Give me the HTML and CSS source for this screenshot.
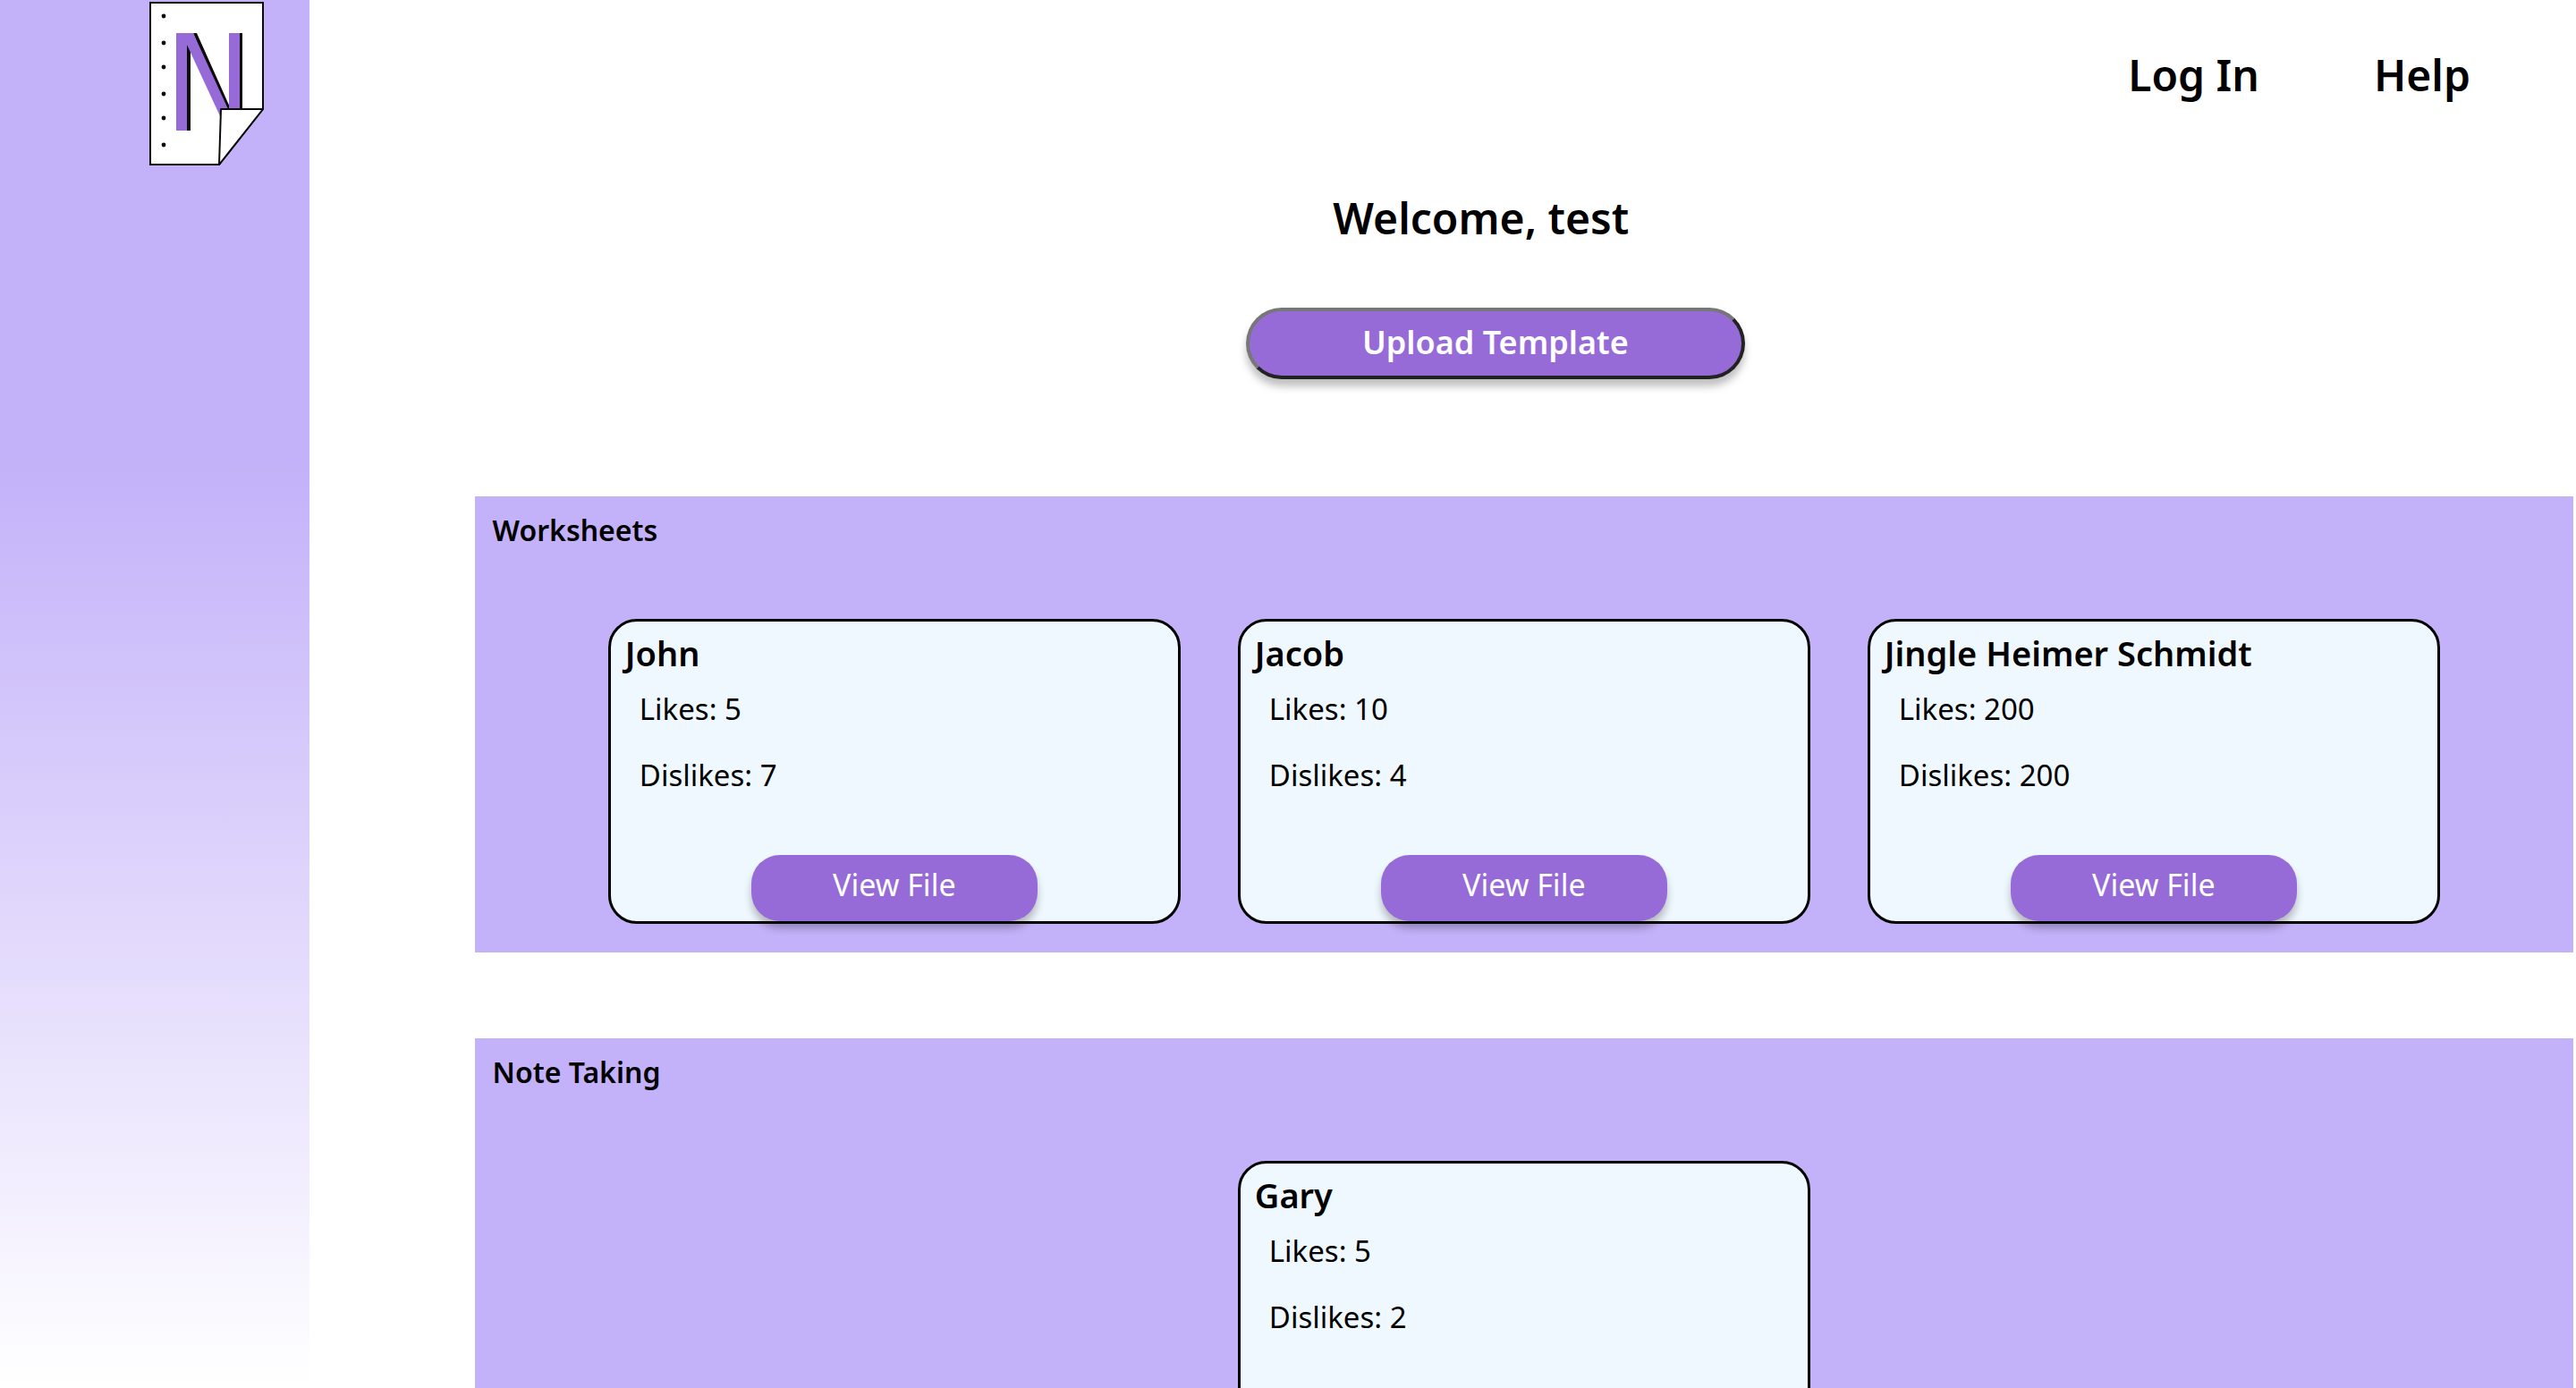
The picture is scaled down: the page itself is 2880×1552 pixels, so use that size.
FILE: index.html
```html
<!DOCTYPE html>
<html lang="en">
<head>
<meta charset="utf-8">
<meta name="viewport" content="width=device-width, initial-scale=1">
<title>Templates</title>
<link rel="stylesheet" href="styles.css">
</head>
<body>
<div class="page">
  <aside class="sidebar">
    <a class="logo" href="#" aria-label="Home">
      <svg viewBox="0 0 130 186" width="130" height="186" aria-hidden="true">
        <path d="M2 3H128V122L79 184H2Z" fill="#fff" stroke="#0b0b08" stroke-width="2"/>
        <path d="M43 50L47 52V146H43Z M50 37H54L92 122H84Z M102 37H105V122H102Z" fill="#0b0b08"/>
        <path d="M31 37H50L89 122L81 132L43 50V146H31Z M90 37H102V122H90Z" fill="#966bd8"/>
        <path d="M81 122H128L79 184Z" fill="#fff" stroke="#0b0b08" stroke-width="2" stroke-linejoin="round"/>
        <g fill="#0b0b08"><circle cx="17" cy="18" r="2.4"/><circle cx="17" cy="48" r="2.4"/><circle cx="17" cy="75" r="2.4"/><circle cx="17" cy="105" r="2.4"/><circle cx="17" cy="132" r="2.4"/><circle cx="17" cy="162" r="2.4"/></g>
      </svg>
    </a>
  </aside>
  <div class="content">
    <nav class="nav">
      <a href="#">Log In</a>
      <a href="#">Help</a>
    </nav>
    <main class="main">
      <header class="intro">
        <h1 class="welcome">Welcome, test</h1>
        <button class="upload" type="button">Upload Template</button>
      </header>
      <section class="panel">
        <h2 class="panel-title">Worksheets</h2>
        <div class="cards">
          <article class="card">
            <h3 class="card-title">John</h3>
            <p class="stat">Likes: 5</p>
            <p class="stat">Dislikes: 7</p>
            <button class="view" type="button">View File</button>
          </article>
          <article class="card">
            <h3 class="card-title">Jacob</h3>
            <p class="stat">Likes: 10</p>
            <p class="stat">Dislikes: 4</p>
            <button class="view" type="button">View File</button>
          </article>
          <article class="card">
            <h3 class="card-title">Jingle Heimer Schmidt</h3>
            <p class="stat">Likes: 200</p>
            <p class="stat">Dislikes: 200</p>
            <button class="view" type="button">View File</button>
          </article>
        </div>
      </section>
      <section class="panel">
        <h2 class="panel-title">Note Taking</h2>
        <div class="cards">
          <article class="card">
            <h3 class="card-title">Gary</h3>
            <p class="stat">Likes: 5</p>
            <p class="stat">Dislikes: 2</p>
            <button class="view" type="button">View File</button>
          </article>
        </div>
      </section>
    </main>
  </div>
</div>
</body>
</html>
```
FILE: styles.css
```css
* {
  box-sizing: border-box;
}

body {
  margin: 0;
  color: #000;
  background: #fff;
  font-family: "Noto Sans", sans-serif;
}

h1, h2, h3, p {
  margin: 0;
}

button {
  font-family: inherit;
  color: #fff;
  background: #966bd8;
  box-shadow: 0 8px 8px rgba(0, 0, 0, 0.25);
}

.page {
  display: flex;
  align-items: flex-start;
}

.sidebar {
  position: sticky;
  top: 0;
  flex: 0 0 12%;
  display: flex;
  justify-content: flex-end;
  align-items: flex-start;
  height: 100vh;
  padding-right: 50px;
  background: linear-gradient(#c3b1f9 33%, #fff);
}

.logo,
.logo svg {
  display: block;
}

.content {
  flex: 1;
  min-width: 0;
}

.nav {
  display: flex;
  justify-content: flex-end;
  gap: 128px;
  padding: 48px 118px 0 0;
}

.nav a {
  color: inherit;
  font-size: 48px;
  font-weight: 600;
  line-height: 72px;
  text-decoration: none;
}

.main {
  display: flex;
  flex-direction: column;
  gap: 96px;
  padding: 88px 3px 0 185px;
}

.intro {
  display: flex;
  flex-direction: column;
  align-items: center;
  gap: 64px;
  padding-bottom: 35px;
}

.welcome {
  margin-right: 96px;
  font-size: 48px;
  font-weight: 600;
  line-height: 72px;
}

.upload {
  width: 558px;
  height: 80px;
  margin-right: 64px;
  padding: 0 0 4px;
  border: 4px solid;
  border-color: #777 #222 #222 #777;
  border-radius: 40px;
  font-size: 36px;
  font-weight: 600;
}

.panel {
  background: #c3b1f9;
  padding: 16px 20px 32px;
}

.panel-title {
  font-size: 32px;
  font-weight: 600;
  line-height: 44px;
}

.cards {
  display: flex;
  justify-content: center;
  gap: 64px;
  padding-top: 77px;
}

.card {
  display: flex;
  flex-direction: column;
  width: 640px;
  height: 341px;
  padding: 9px 16px 0;
  border: 3px solid #000;
  border-radius: 32px;
  background: #f0f8ff;
}

.card-title {
  font-size: 38px;
  font-weight: 600;
  line-height: 52px;
}

.stat {
  padding-left: 16px;
  font-size: 33px;
  line-height: 74px;
}

.view {
  width: 320px;
  height: 74px;
  margin: auto auto 0;
  padding: 0 0 8px;
  border: 0;
  border-radius: 32px;
  font-size: 34px;
}
```
